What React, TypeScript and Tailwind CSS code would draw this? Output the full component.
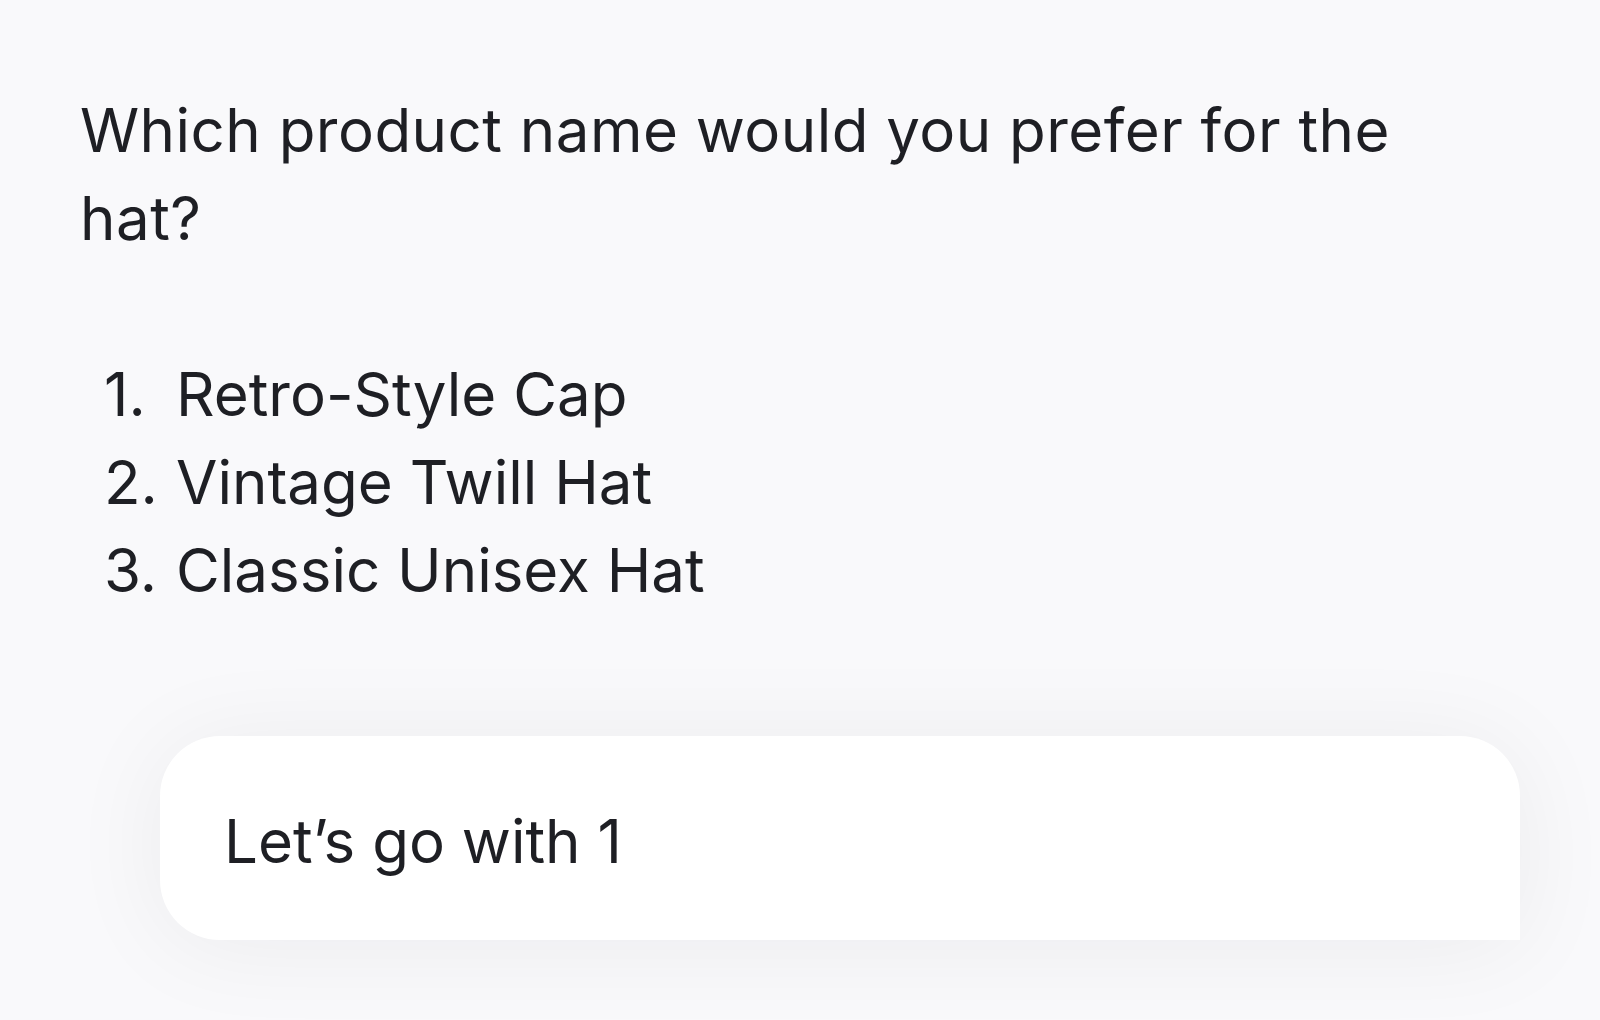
export default function App() {
  const options = ["Retro-Style Cap", "Vintage Twill Hat", "Classic Unisex Hat"];

  return (
    <div
      className="min-h-[1020px] w-full overflow-hidden bg-[#f9f9fb] text-[#1e1f24]"
      style={{ fontFamily: "Inter, 'Noto Sans', sans-serif" }}
    >
      <div className="px-[80px] pt-[86px]">
        <p className="max-w-[1440px] text-[60px] leading-[88px] tracking-[0.008em]">
          Which product name would you prefer for the hat?
        </p>

        <ol className="mt-[88px] text-[60px] leading-[88px]">
          {options.map((opt, i) => (
            <li key={opt} className="flex">
              <span className="w-[96px] shrink-0 pl-[24px]">{i + 1}.</span>
              <span>{opt}</span>
            </li>
          ))}
        </ol>
      </div>

      <div className="mt-[122px] pl-[160px]">
        <div className="flex h-[204px] w-[1360px] items-center rounded-[60px] rounded-br-none bg-white px-[64px] pt-[6px] shadow-[0_6px_100px_rgba(20,20,40,0.06)]">
          <span className="text-[60px] leading-[88px]">Let’s go with 1</span>
        </div>
      </div>
    </div>
  );
}
